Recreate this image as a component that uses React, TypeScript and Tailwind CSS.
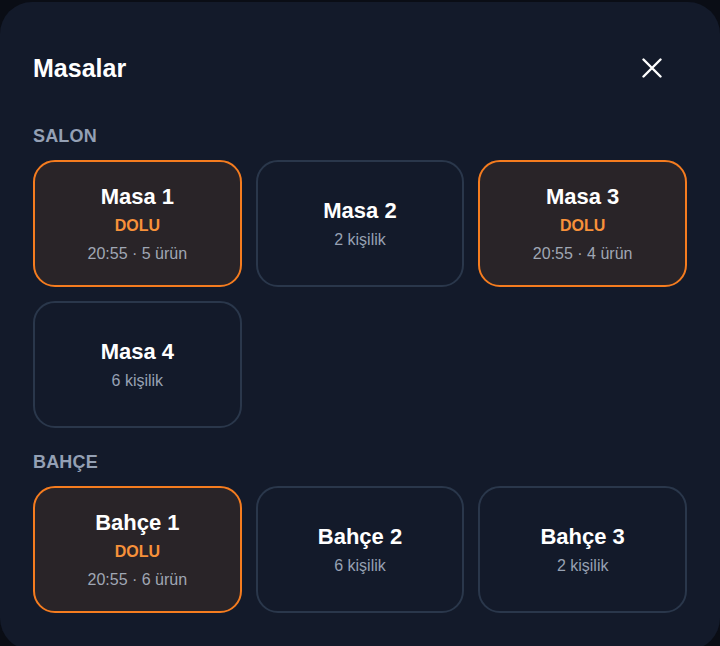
type Table = {
  name: string;
  busy?: { time: string; items: number };
  seats?: number;
};

const sections: { title: string; tables: Table[] }[] = [
  {
    title: 'SALON',
    tables: [
      { name: 'Masa 1', busy: { time: '20:55', items: 5 } },
      { name: 'Masa 2', seats: 2 },
      { name: 'Masa 3', busy: { time: '20:55', items: 4 } },
      { name: 'Masa 4', seats: 6 },
    ],
  },
  {
    title: 'BAHÇE',
    tables: [
      { name: 'Bahçe 1', busy: { time: '20:55', items: 6 } },
      { name: 'Bahçe 2', seats: 6 },
      { name: 'Bahçe 3', seats: 2 },
    ],
  },
];

function TableCard({ table }: { table: Table }) {
  const busy = !!table.busy;
  return (
    <button
      className={`flex h-[127px] flex-col items-center justify-center rounded-[22px] border-[2.5px] pt-[2px] ${
        busy ? 'border-[#f57c1f] bg-[#292428]' : 'border-[#2a374b] bg-[#131a2a]'
      }`}
    >
      <span className="text-[22px] font-bold leading-[28px] text-white">{table.name}</span>
      {table.busy ? (
        <>
          <span className="mt-[3px] text-base font-bold leading-6 text-[#f7913a]">DOLU</span>
          <span className="mt-1 text-base leading-6 text-[#a0a7b4]">
            {table.busy.time} · {table.busy.items} ürün
          </span>
        </>
      ) : (
        <span className="mt-[3px] text-base leading-6 text-[#97a1b3]">{table.seats} kişilik</span>
      )}
    </button>
  );
}

export default function App() {
  return (
    <div
      className="h-[646px] w-[720px] overflow-hidden bg-[#0a0d15]"
      style={{ fontFamily: '"Liberation Sans", Arial, sans-serif' }}
    >
      <div className="mt-[2px] h-[648px] rounded-[32px] bg-[#131a2a] px-[33px] pt-[46px]">
        <div className="flex items-center justify-between">
          <h2 className="text-[25px] font-bold leading-8 text-white">Masalar</h2>
          <button className="mr-[15px] p-[10px] text-white">
            <svg width="20" height="20" viewBox="0 0 20 20" fill="none" stroke="currentColor" strokeWidth="2.4" strokeLinecap="round">
              <path d="M1.5 1.5 18.5 18.5M18.5 1.5 1.5 18.5" />
            </svg>
          </button>
        </div>

        <div className="mt-[34px] flex flex-col gap-[20px]">
          {sections.map((s) => (
            <section key={s.title}>
              <h3 className="mb-[10px] text-lg font-bold leading-7 tracking-[0.01em] text-[#94a0b4]">{s.title}</h3>
              <div className="grid grid-cols-3 gap-[14px]">
                {s.tables.map((t) => (
                  <TableCard key={t.name} table={t} />
                ))}
              </div>
            </section>
          ))}
        </div>
      </div>
    </div>
  );
}
